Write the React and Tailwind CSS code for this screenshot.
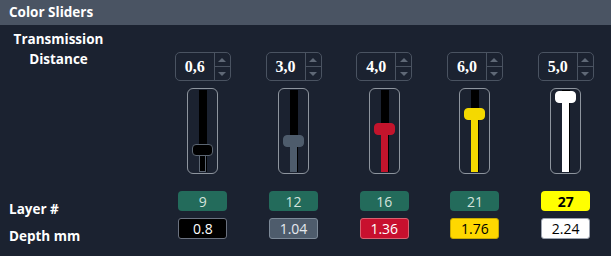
import React from 'react';

const columns = [
    { dist: "0,6", layer: 9, depth: "0.8", thumbTop: 56, color: "#000000", thumbBorder: "border-[#5c6673]", fillBorder: true, depthCls: "bg-black border-[#6b7280] text-white", layerCls: "bg-[#236b5b] text-[#d3e3dd]" },
    { dist: "3,0", layer: 12, depth: "1.04", thumbTop: 47, color: "#4e5c6c", thumbBorder: "border-[#4e5c6c]", depthCls: "bg-[#4e5c6c] border-[#7d8a98] text-[#e5e9ee]", layerCls: "bg-[#236b5b] text-[#d3e3dd]" },
    { dist: "4,0", layer: 16, depth: "1.36", thumbTop: 35, color: "#c3142c", thumbBorder: "border-[#c3142c]", depthCls: "bg-[#c8102e] border-[#d8606f] text-white", layerCls: "bg-[#236b5b] text-[#d3e3dd]" },
    { dist: "6,0", layer: 21, depth: "1.76", thumbTop: 20, color: "#f4d900", thumbBorder: "border-[#f4d900]", depthCls: "bg-[#ffd800] border-[#c7a900] text-black", layerCls: "bg-[#236b5b] text-[#d3e3dd]" },
    { dist: "5,0", layer: 27, depth: "2.24", thumbTop: 3, color: "#ffffff", thumbBorder: "border-white", depthCls: "bg-white border-[#9ca3af] text-black", layerCls: "bg-[#ffff00] text-black font-bold" },
];

// small numeric input with up/down spinner
const SpinBox = ({ value }) => (
    <div className="flex w-[56px] h-[29px] border border-[#4a5361] rounded-[5px] overflow-hidden">
        <div className="flex-1 flex items-center justify-center text-white font-bold text-[16px]" style={{ fontFamily: '"Liberation Serif", serif' }}>
            {value}
        </div>
        <div className="w-[16px] flex flex-col border-l border-[#4a5361]">
            <div className="flex-1 flex items-center justify-center border-b border-[#4a5361]">
                <div className="w-0 h-0 border-l-[4px] border-r-[4px] border-b-[4px] border-l-transparent border-r-transparent border-b-[#5f6876]" />
            </div>
            <div className="flex-1 flex items-center justify-center">
                <div className="w-0 h-0 border-l-[4px] border-r-[4px] border-t-[4px] border-l-transparent border-r-transparent border-t-[#5f6876]" />
            </div>
        </div>
    </div>
);

const Slider = ({ col }) => (
    <div className="relative w-[31px] h-[86px] border border-[#8e959e] rounded-[6px]">
        <div className="absolute left-[11px] top-[1px] bottom-[1px] w-[8px] bg-black" />
        <div
            className={`absolute left-[11px] bottom-[1px] w-[7px] ${col.fillBorder ? "border border-[#5c6673]" : ""}`}
            style={{ top: col.thumbTop + 6, backgroundColor: col.color }}
        />
        <div
            className={`absolute left-[4px] w-[21px] h-[12px] rounded-[4px] border ${col.thumbBorder}`}
            style={{ top: col.thumbTop - 1, backgroundColor: col.color }}
        />
    </div>
);

const App = () => {
    return (
        <div className="w-[611px] h-[256px] bg-[#1b2230] overflow-hidden" style={{ fontFamily: '"Open Sans", sans-serif' }}>
            <div className="h-[25px] bg-[#4a5463] flex items-center pl-[9px]">
                <span className="text-white font-bold text-[13.5px]">Color Sliders</span>
            </div>

            <div className="flex">
                <div className="w-[158px] h-[231px] flex flex-col">
                    <div className="w-[117px] text-center text-white font-bold text-[13.5px] leading-[20px] pt-[4px]">
                        Transmission<br />Distance
                    </div>
                    <div className="mt-auto pl-[9px] text-white font-bold text-[13.5px] leading-[27px] pb-[6px]">
                        <div>Layer #</div>
                        <div>Depth mm</div>
                    </div>
                </div>

                {columns.map((col) => (
                    <div key={col.layer} className="w-[91px] flex flex-col items-center">
                        <div className="mt-[27px]">
                            <SpinBox value={col.dist} />
                        </div>
                        <div className="mt-[7px]">
                            <Slider col={col} />
                        </div>
                        <div className={`mt-[17px] w-[49px] h-[20px] rounded-[4px] flex items-center justify-center text-[14px] ${col.layerCls}`}>
                            {col.layer}
                        </div>
                        <div className={`mt-[7px] w-[49px] h-[21px] rounded-[3px] border flex items-center justify-center text-[14px] ${col.depthCls}`}>
                            {col.depth}
                        </div>
                    </div>
                ))}
            </div>
        </div>
    );
};

export default App;
